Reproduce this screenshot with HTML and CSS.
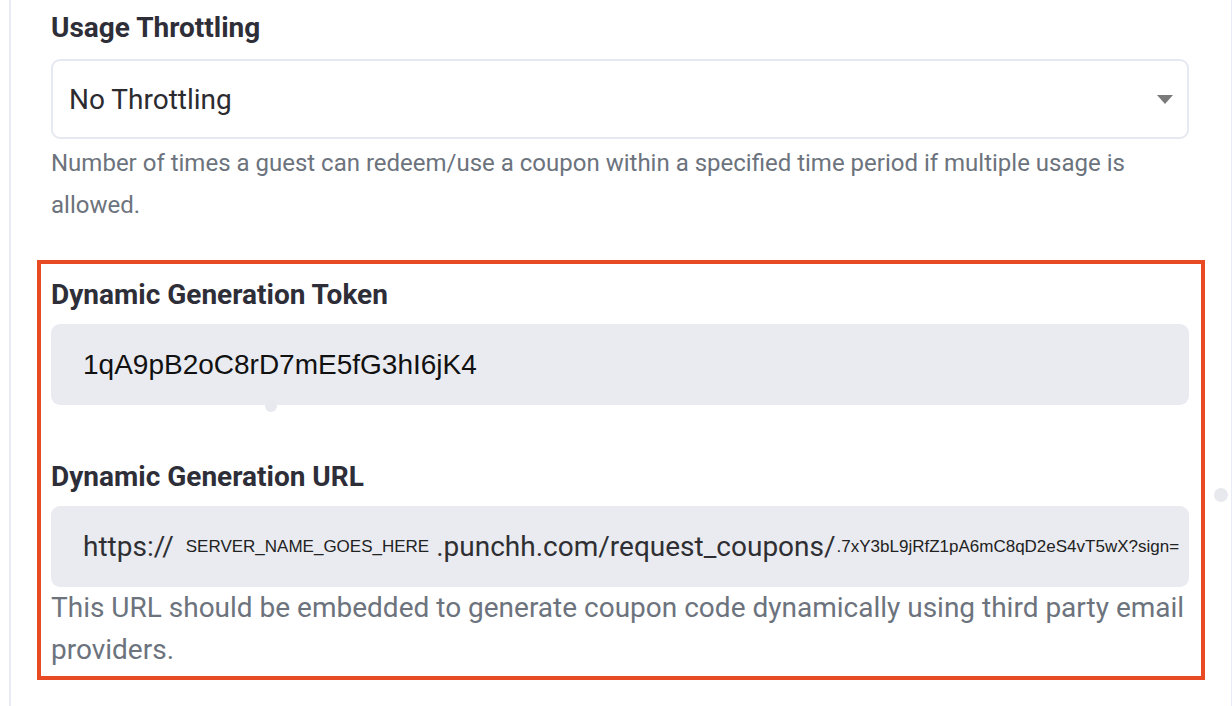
FILE: index.html
```html
<!DOCTYPE html>
<html lang="en">
<head>
<meta charset="utf-8">
<title>Coupon settings</title>
<link rel="stylesheet" href="styles.css">
</head>
<body>
<div class="frame">
  <div class="panel">
    <div class="group">
      <div class="label">Usage Throttling</div>
      <div class="select">
        <span class="select-value">No Throttling</span>
        <span class="caret"></span>
      </div>
      <p class="help">Number of times a guest can redeem/use a coupon within a specified time period if multiple usage is allowed.</p>
    </div>

    <div class="highlight">
      <div class="label label-token">Dynamic Generation Token</div>
      <div class="readonly token">
        <span>1qA9pB2oC8rD7mE5fG3hI6jK4</span>
        <span class="handle handle-bottom"></span>
      </div>

      <div class="label label-url">Dynamic Generation URL</div>
      <div class="readonly url">
        <span class="url-big">https://</span><span class="url-small server">SERVER_NAME_GOES_HERE</span><span class="url-big">.punchh.com/request_coupons/</span><span class="url-small">.7xY3bL9jRfZ1pA6mC8qD2eS4vT5wX?sign=</span>
      </div>
      <p class="help help-lg">This URL should be embedded to generate coupon code dynamically using third party email providers.</p>
      <span class="handle handle-side"></span>
    </div>
  </div>
</div>
</body>
</html>
```

FILE: styles.css
```css
html, body {
  margin: 0;
  padding: 0;
  background: #ffffff;
}

body {
  font-family: Roboto, "Noto Sans", Arial, sans-serif;
  width: 1232px;
  height: 706px;
  overflow: hidden;
}

.frame {
  margin-left: 9px;
  width: 1220px;
  height: 706px;
  border-left: 2px solid #e8ebf5;
  border-right: 2px solid #e8ebf5;
}

.panel {
  padding-left: 40px;
  width: 1138px;
}

.group {
  padding-top: 10px;
}

.label {
  font-size: 28px;
  font-weight: 700;
  line-height: 36px;
  color: #2e2e38;
  margin-bottom: 13px;
}

.select {
  box-sizing: border-box;
  height: 80px;
  border: 2px solid #e6e9f2;
  border-radius: 9px;
  display: flex;
  align-items: center;
  justify-content: space-between;
  padding: 0 14px 0 16px;
}

.select-value {
  font-size: 28px;
  color: #2b2b30;
}

.caret {
  width: 0;
  height: 0;
  border-left: 8px solid transparent;
  border-right: 8px solid transparent;
  border-top: 9px solid #7a7a7a;
}

.help {
  margin: 3px 0 0;
  font-size: 24px;
  line-height: 42px;
  color: #6c737d;
}

.highlight {
  position: relative;
  box-sizing: border-box;
  margin-top: 34px;
  margin-left: -14px;
  width: 1168px;
  border: 4px solid #e84b24;
  padding: 13px 12px 5px 10px;
}

.label-token {
  margin-bottom: 11px;
}

.readonly {
  position: relative;
  box-sizing: border-box;
  height: 81px;
  background: #e9ebf0;
  border-radius: 9px;
  display: flex;
  align-items: center;
  padding-left: 32px;
  white-space: nowrap;
}

.token span:first-child {
  font-family: "Liberation Sans", Arial, sans-serif;
  font-size: 28px;
  color: #111111;
}

.label-url {
  margin-top: 54px;
  margin-bottom: 11px;
}

.url-big {
  font-size: 28px;
  color: #2f2f33;
}

.url-small {
  font-family: "Liberation Sans", Arial, sans-serif;
  font-size: 17px;
  color: #222222;
  margin-left: 1px;
}

.server {
  margin: 0 7px 0 12px;
}

.help-lg {
  margin-top: 0;
  font-size: 28px;
}

.handle {
  position: absolute;
  border-radius: 50%;
  background: #e8e9ee;
}

.handle-bottom {
  width: 12px;
  height: 12px;
  left: 214px;
  bottom: -7px;
}

.handle-side {
  width: 14px;
  height: 14px;
  right: -27px;
  top: 224px;
}
```
